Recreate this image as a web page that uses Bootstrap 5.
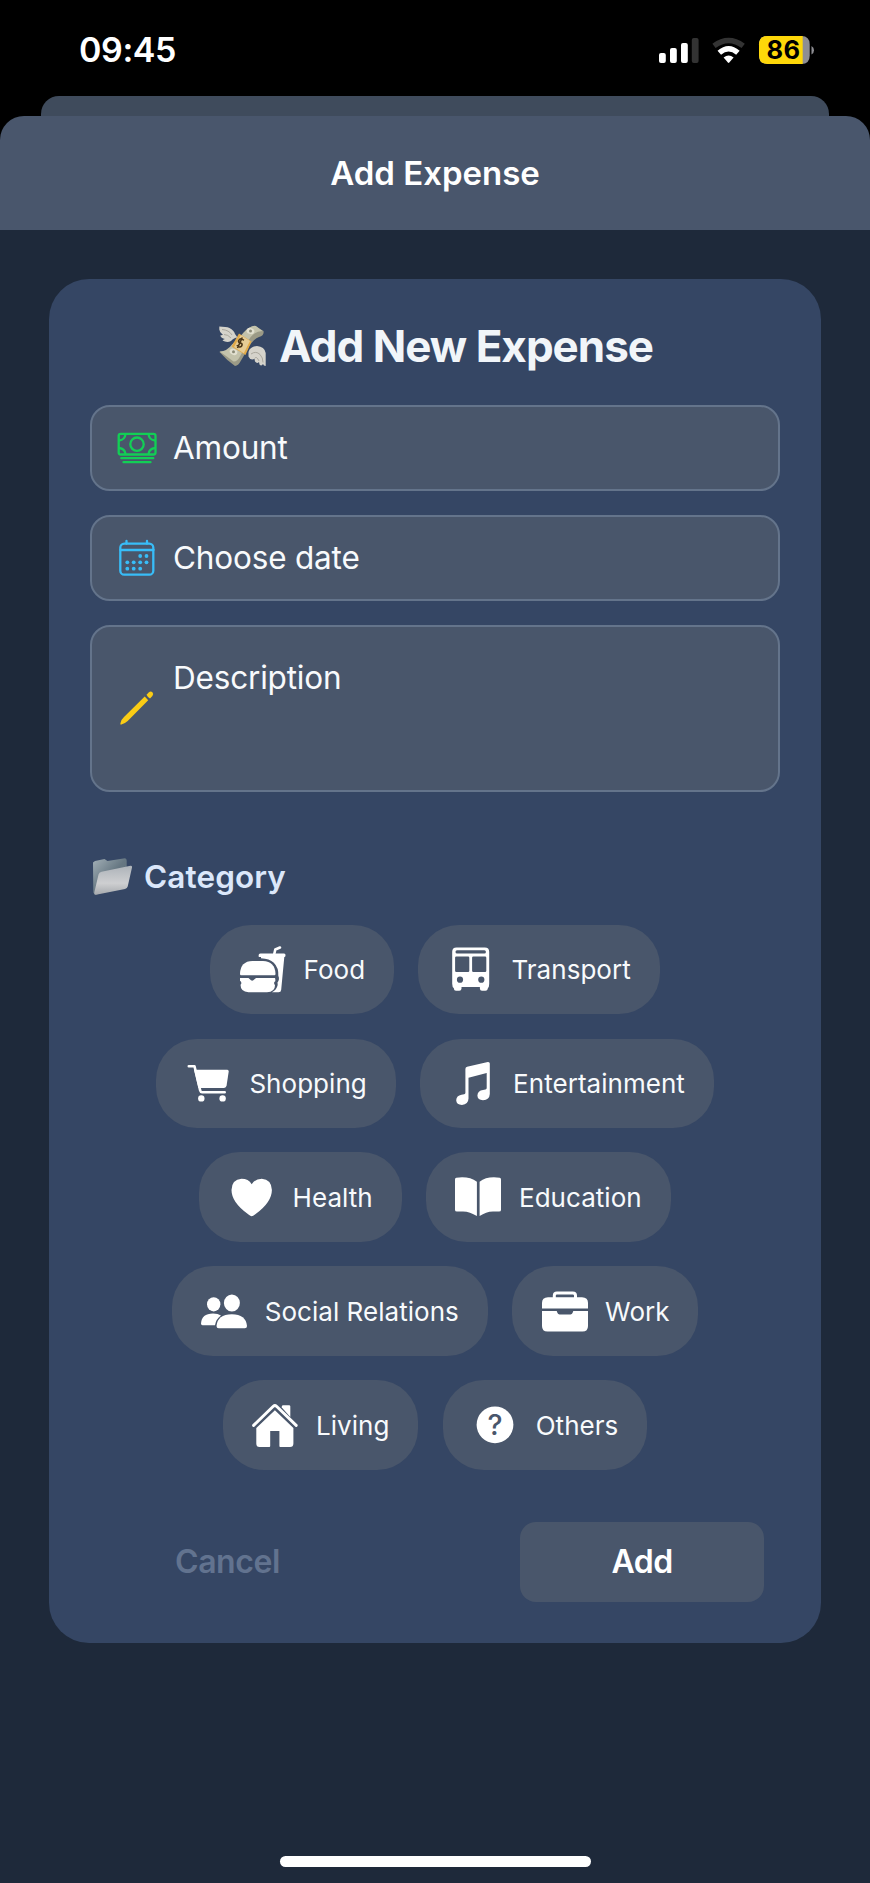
<!DOCTYPE html>
<html lang="en">
<head>
<meta charset="utf-8">
<meta name="viewport" content="width=device-width, initial-scale=1">
<title>Add Expense</title>
<link href="https://cdn.jsdelivr.net/npm/bootstrap@5.3.0/dist/css/bootstrap.min.css" rel="stylesheet">
<style>
body{font-family:Inter,"Liberation Sans",sans-serif;background:#1e293a;color:#f8fafc;height:1883px;overflow:hidden}
.status-bar{background:#000;height:96px;padding:4px 55px 0 79px}
.clock{font-size:34px;font-weight:600;line-height:1;letter-spacing:-.4px;color:#fff}
.status-icons{width:158px;height:30px}
.status-icons text{font-size:25.5px;font-weight:700;letter-spacing:.3px}
.sheets{background:#000}
.sheet-back{height:20px;margin:0 41px;background:#3f4b5c;border-radius:18px 18px 0 0}
.sheet-head{height:114px;padding-top:2px;background:#49566c;border-radius:24px 24px 0 0;font-size:33px;font-weight:600;color:#fff}
.panel{margin:49px 49px 0;height:1364px;background:#354664;border-radius:40px;padding:0 41px}
.panel-title{height:126px;padding-top:8px;font-size:44px;font-weight:700;color:#f1f5f9;letter-spacing:-1px}
.panel-title svg{width:50px;height:46px;margin-right:12px}
.field{background:#49566b;border:2px solid #64748b;border-radius:20px;height:86px;padding-left:23.5px;font-size:31.5px;margin-bottom:24px;letter-spacing:-.18px}
.field svg{width:42px;height:42px;margin-right:15.5px;fill:none;flex:none}
.field.tall{height:166.5px;margin-bottom:0}
.field.tall span{margin-top:-61px}
.cat{height:40px;margin-top:65.5px;font-size:31.5px;font-weight:600;color:#dbe7fa;letter-spacing:.1px}
.cat svg{width:40px;height:38px;margin:-2px 12px 0 2px}
.pills{margin-top:27.7px;gap:24.4px}
.pill{height:89.5px;border-radius:41px;background:#49566b;padding:0 28.8px 0 29.5px;font-size:26px;letter-spacing:.04px;gap:17.6px}
.pill svg{width:46px;height:50px;fill:#fff;flex:none}
.pill .cut{fill:#49566b}
.pill .line{fill:none;stroke:#fff;stroke-linecap:round;stroke-linejoin:round}
.actions{margin-top:52.4px;padding:0 16px 0 15.5px}
.btn-act{width:244px;height:80px;border:0;border-radius:16px;font-size:32px;font-weight:600;letter-spacing:-.5px;padding:0}
.btn-act.cancel{color:#62738f;letter-spacing:-.4px}
.btn-act.add{background:#49566b;color:#fff}
.home{width:311px;height:11px;border-radius:6px;background:#fff;margin:212.5px auto 0}
</style>
</head>
<body>
<header>
  <div class="status-bar d-flex align-items-center justify-content-between">
    <span class="clock">09:45</span>
    <svg class="status-icons" viewBox="657 34 158 30">
      <g fill="#fff"><rect x="659" y="52" width="6.800" height="10" rx="2"/><rect x="670" y="47" width="6.800" height="15" rx="2"/><rect x="681" y="42" width="6.800" height="20" rx="2"/><rect x="691.800" y="37" width="6.800" height="25" rx="2" fill="#333"/></g>
      <g fill="none" stroke-width="5.400">
        <path d="M714 44.800Q728.600 34 743.200 44.800" stroke="#333"/>
        <path d="M719.300 51.700Q728.600 43.800 737.900 51.700" stroke="#fff"/>
      </g>
      <path d="M723.600 56.500Q728.600 52.500 733.600 56.500L729.300 61.500Q728.600 62.300 727.900 61.500Z" fill="#fff"/>
      <path d="M767.500 35H801.500Q809.700 35 809.700 43.500V54.500Q809.700 63 801.500 63H767.500Q759 63 759 54.500V43.500Q759 35 767.500 35Z" fill="#8e8e93"/>
      <path d="M767.500 35H802.700V63H767.500Q759 63 759 54.500V43.500Q759 35 767.500 35Z" fill="#fed709"/>
      <path d="M811.500 45Q814 46.500 814 49.200Q814 52 811.500 53.500Z" fill="#8e8e93"/>
      <text x="766.500" y="58.400" fill="#000">86</text>
    </svg>
  </div>
  <div class="sheets">
    <div class="sheet-back"></div>
    <div class="sheet-head d-flex align-items-center justify-content-center">Add Expense</div>
  </div>
</header>

<main class="panel">
  <h1 class="panel-title d-flex align-items-center justify-content-center mb-0">
    <svg viewBox="217 323.500 50 46">
      <path d="M237.500 341L243.500 333Q251 325.500 256.500 327.500L263.500 331.500Q264.500 336 259 337.500Q252.500 340 247.500 350L241 361Q238.500 366 235 366.500Q227 361 219.500 352.500Q226 353 230.500 348Z" fill="#9b9a86"/>
      <path d="M243 334Q250.500 325.300 256 326.500L262.500 331.500Q252 331.500 246.500 345L240 357Q237 362.500 233.500 362Q227 357 219.500 352Q227.500 351.500 232 345Z" fill="#c3c2ab"/>
      <ellipse cx="250.500" cy="331.500" rx="4" ry="3" fill="#e2e0d0" transform="rotate(20 250.500 331.500)"/><circle cx="250.500" cy="331.500" r="1.500" fill="#8c8b78"/>
      <ellipse cx="233.500" cy="352.300" rx="4" ry="3" fill="#e2e0d0" transform="rotate(25 233.500 352.300)"/><circle cx="233.500" cy="352.300" r="1.500" fill="#8c8b78"/>
      <path d="M239 334L251.500 342L245.500 355.500L231.500 347Z" fill="#e2aa48"/>
      <path d="M240.800 335.500L250 341.500L243.800 353.800L234 347.500Z" fill="#e6cc95"/>
      <path d="M243.800 340.800Q240.500 337.800 238.800 340.800Q237.800 343 240.500 343.600Q243 344 241.600 346.500Q239.800 348.800 236.800 345.800M242.300 338L237.500 348.500" fill="none" stroke="#4a3516" stroke-width="1.600"/>
      <path d="M219.300 327Q226 327 229.500 328.500Q234 331 235 334.500L237.500 338Q234 338 231 341.500Q227 343.500 222.500 341Q223.500 339.800 225 339.500Q221 338.500 220.300 336Q221.500 335.300 223 335.500Q219.500 333 219.300 330Z" fill="#d5d3cb"/>
      <path d="M222 330Q229 330.500 232 335.500M224 335Q228 335 231 338.500" fill="none" stroke="#aaa79d" stroke-width="1"/>
      <path d="M248.500 352.500Q250 347 257 346.500Q264.500 347 265.700 353.500V366.500Q263.500 366.500 263 364.500Q261.500 367 259.500 365L259 362.500Q257 364.500 255 362L254.500 359.500Q250 361 248.500 357Z" fill="#d5d3cb"/>
      <path d="M251 354.500Q256 351 260 355Q263 358 263 363M254.500 359Q256.500 356 259 361.500" fill="none" stroke="#aaa79d" stroke-width="1"/>
    </svg>
    <span>Add New Expense</span>
  </h1>

  <div class="field d-flex align-items-center">
    <svg viewBox="115.500 427 42 42" stroke="#12cf55" stroke-width="2.300">
      <rect x="118.200" y="433.800" width="36.800" height="20.700" rx="2"/>
      <circle cx="136.500" cy="444.200" r="6.700"/>
      <path d="M125 434Q124.500 440 118.500 440.500M148 434Q148.500 440 154.700 440.500M125 454.300Q124.500 448.500 118.500 448M148 454.300Q148.500 448.500 154.700 448"/>
      <path d="M120.800 458.200H152.800M123 462.200H150" stroke-linecap="round"/>
    </svg>
    <span>Amount</span>
  </div>
  <div class="field d-flex align-items-center">
    <svg viewBox="115.500 537 42 42" stroke="#38bdf8" stroke-width="2.300">
      <rect x="119.800" y="543.700" width="33" height="31" rx="4"/>
      <path d="M120 550H153M126 543.500V541M146.500 543.500V541" stroke-linecap="round"/>
      <g fill="#38bdf8" stroke="none"><circle cx="139.700" cy="556" r="1.900"/><circle cx="146" cy="556" r="1.900"/><circle cx="126.800" cy="562.300" r="1.900"/><circle cx="133.200" cy="562.300" r="1.900"/><circle cx="139.700" cy="562.300" r="1.900"/><circle cx="146" cy="562.300" r="1.900"/><circle cx="126.800" cy="568.700" r="1.900"/><circle cx="133.200" cy="568.700" r="1.900"/><circle cx="139.700" cy="568.700" r="1.900"/></g>
    </svg>
    <span>Choose date</span>
  </div>
  <div class="field tall d-flex align-items-center">
    <svg viewBox="115.500 687.500 42 42">
      <path d="M144.200 697L147.700 700.700L127.200 721.500Q124 724.500 120.300 725.200Q119.600 724.800 120 723.500Q120.500 720.200 123.500 717.500Z" fill="#facc15"/>
      <path d="M146 695.300L148.200 693Q150.200 691.200 151.900 692.800Q153.500 694.600 151.900 696.500L149.500 698.900Q147.300 698 146 695.300Z" fill="#facc15"/>
    </svg>
    <span>Description</span>
  </div>

  <h2 class="cat d-flex align-items-center mb-0">
    <svg viewBox="92 856.500 40 38">
      <defs>
        <linearGradient id="fold-back" x1="0" y1="0" x2="1" y2="1"><stop offset="0" stop-color="#a3b0b7"/><stop offset=".5" stop-color="#667782"/><stop offset="1" stop-color="#5e6f7a"/></linearGradient>
        <linearGradient id="fold-front" x1="0" y1="0" x2="0" y2="1"><stop offset="0" stop-color="#adb3b9"/><stop offset=".6" stop-color="#cecfd1"/><stop offset="1" stop-color="#a5a9ad"/></linearGradient>
      </defs>
      <path d="M93 862L95 860.500L104.500 858.500L107.500 860.500L125 857.800Q126.700 858 126.700 860V884L95 894.500L93.300 892Z" fill="url(#fold-back)"/>
      <path d="M98.500 874Q99 871.800 101.500 871.200L130.500 865.200Q132.300 865 132 867L127.700 886Q127.300 888 125 888.400L96 894.300Q93.800 894.500 94.300 892Z" fill="url(#fold-front)"/>
    </svg>
    <span>Category</span>
  </h2>

  <div class="pills d-flex flex-wrap justify-content-center">
    <div class="pill d-flex align-items-center">
      <svg viewBox="240 944.300 46 50">
        <path d="M240 974Q240.500 961.500 252.500 961.300H263Q275 961.800 275.500 974Q275.500 975.600 274.500 975.600H241Q240 975.600 240 974Z"/>
        <path d="M240 978.300H248.500L251 980.600Q252.200 981.500 253.300 980.600L256 978.300H275Q275.500 979.500 275.300 981.500Q273 983 275 985.500Q275 992.300 267 992.500H248.500Q240.500 992 240.500 985Q242.500 983 240 981Z"/>
        <path d="M261 957.300H258.800Q258 953.800 260.500 953.800H284Q285.800 953.800 285.500 956Q285.300 957.200 284.300 957.300L281.200 990Q281 992.500 278.500 992.500H272Q276 990.500 277.500 986Q278 984 277.400 983Q280 979.500 278.300 976Q278.800 968 273.800 963Q269.500 958.800 261 958.500Z"/>
        <path class="line" d="M274.300 954L275.300 949.800L280 947.800" stroke-width="2.600"/>
      </svg><span>Food</span>
    </div>
    <div class="pill d-flex align-items-center">
      <svg viewBox="449 944.300 46 50">
        <path d="M457.500 947.700H485.800Q490.200 947.700 490.200 952V984Q490.200 987.300 488.800 988.500V989Q488.500 991 486.500 991H483Q481 991 480.900 989V987.400H462.500V989Q462.300 991 460.300 991H457Q455 991 454.900 989V988.500Q453.200 987.300 453.200 984V952Q453.200 947.700 457.500 947.700Z"/>
        <g class="cut"><rect x="456.500" y="950.600" width="30.400" height="3.100" rx="1.500"/><rect x="456.100" y="956.900" width="14.200" height="15.400" rx="1.200"/><rect x="473.100" y="956.900" width="14.200" height="15.400" rx="1.200"/><circle cx="461" cy="980" r="3.100"/><circle cx="482.300" cy="980" r="3.100"/></g>
      </svg><span>Transport</span>
    </div>
    <div class="pill d-flex align-items-center">
      <svg viewBox="186 1058 46 50">
        <path class="line" d="M188.800 1066.300H194.500L200.200 1090.500Q200.600 1092.200 202 1092.200H224.700" stroke-width="2.600"/>
        <path d="M194 1069.700H227.300Q228.800 1069.800 228.700 1071.500L226.600 1085.500Q226.200 1087.900 224 1088H198.500Z"/>
        <circle cx="201.300" cy="1098.400" r="3.200"/><circle cx="222.600" cy="1098.400" r="3.200"/>
      </svg><span>Shopping</span>
    </div>
    <div class="pill d-flex align-items-center">
      <svg viewBox="449.500 1058 46 50">
        <path d="M464.900 1069Q464.900 1067.200 466.600 1066.700L487.300 1061.900Q489.300 1061.700 489.300 1063.500V1094Q489 1100 482.500 1100.200Q477 1100 476.900 1095.500Q477.200 1090.500 482.500 1090L485 1089.500Q486.200 1089.200 486.200 1088V1073L468 1077.700V1098.500Q467.800 1104.500 461.500 1104.900Q455.900 1104.800 455.700 1100.300Q455.900 1095.500 461 1094.700L463.700 1094.200Q464.900 1094 464.900 1092.800Z"/>
      </svg><span>Entertainment</span>
    </div>
    <div class="pill d-flex align-items-center">
      <svg viewBox="229.500 1171.500 46 50">
        <path d="M252.200 1215.700Q251 1215.500 249 1214Q232 1202 232 1189.500Q232.300 1179 242 1178.300Q249 1178.300 252.200 1183.700Q255.500 1178.300 262.300 1178.300Q272 1179 272.400 1189.500Q272.300 1202 255.500 1214Q253.500 1215.500 252.200 1215.700Z"/>
      </svg><span>Health</span>
    </div>
    <div class="pill d-flex align-items-center">
      <svg viewBox="456 1171.500 46 50">
        <path d="M456 1179Q456 1177.600 457.300 1177.300Q470 1175.500 477.900 1181.200V1215.500Q471 1211 464 1210.900L458 1211.100Q456 1211.100 456 1209.500Z"/>
        <path d="M502 1179Q502 1177.600 500.700 1177.300Q488 1175.500 480.600 1181.200V1215.500Q487 1211 494 1210.900L500 1211.100Q502 1211.100 502 1209.500Z"/>
      </svg><span>Education</span>
    </div>
    <div class="pill d-flex align-items-center">
      <svg viewBox="202 1285.500 46 50">
        <ellipse cx="214.700" cy="1303.800" rx="6.700" ry="7.100"/><ellipse cx="232.900" cy="1302.500" rx="8" ry="8.600"/>
        <path d="M202 1323Q202.500 1313 214 1312.900Q219 1313 222 1315Q217 1318.500 216 1324.700H203.500Q202 1324.500 202 1323Z"/>
        <path d="M217.500 1325.500Q218.500 1313.800 232.800 1313.700Q247 1313.800 248 1325.500Q248 1327.800 245.800 1327.800H219.700Q217.500 1327.800 217.500 1325.500Z"/>
      </svg><span>Social Relations</span>
    </div>
    <div class="pill d-flex align-items-center">
      <svg viewBox="543 1285.500 46 50">
        <path class="line" d="M555.300 1298V1295Q555.300 1292.500 558 1292.500H573.700Q576.500 1292.500 576.500 1295V1298" stroke-width="3"/>
        <path d="M549 1296.700H583Q589 1296.900 589 1302.500V1307.900H543V1302.500Q543 1296.900 549 1296.700Z"/>
        <path d="M543 1310.600H557.700L558.500 1312.500Q559 1313.900 560.500 1313.900H571.500Q573 1313.900 573.500 1312.500L574.300 1310.600H589V1325.500Q589 1331 583.500 1331H548.500Q543 1331 543 1325.500Z"/>
      </svg><span>Work</span>
    </div>
    <div class="pill d-flex align-items-center">
      <svg viewBox="253 1399.500 46 50">
        <path class="line" d="M254.600 1424.900L274.300 1405.800Q275.900 1404.400 277.500 1405.800L297.200 1424.900" stroke-width="2.900"/>
        <path d="M282.800 1407V1406Q282.800 1404.700 284.300 1404.700H290Q291.300 1404.700 291.300 1406V1416.500Z"/>
        <path d="M275.900 1409.700L294.400 1427.500V1443Q294.400 1446.500 291 1446.500H281.200Q280.400 1446.500 280.400 1445.500V1430.500H271.200V1445.500Q271.200 1446.500 270.400 1446.500H260.500Q257.300 1446.500 257.300 1443V1427.500Z"/>
      </svg><span>Living</span>
    </div>
    <div class="pill d-flex align-items-center">
      <svg viewBox="472.300 1399.500 46 50">
        <circle cx="495.300" cy="1424.300" r="18.400"/>
        <text class="cut" x="495.300" y="1434.700" font-size="28.500" font-weight="500" text-anchor="middle">?</text>
      </svg><span>Others</span>
    </div>
  </div>

  <div class="actions d-flex justify-content-between">
    <button class="btn btn-act cancel">Cancel</button>
    <button class="btn btn-act add">Add</button>
  </div>
</main>
<div class="home"></div>
<script src="https://cdn.jsdelivr.net/npm/bootstrap@5.3.0/dist/js/bootstrap.bundle.min.js"></script>
</body>
</html>
